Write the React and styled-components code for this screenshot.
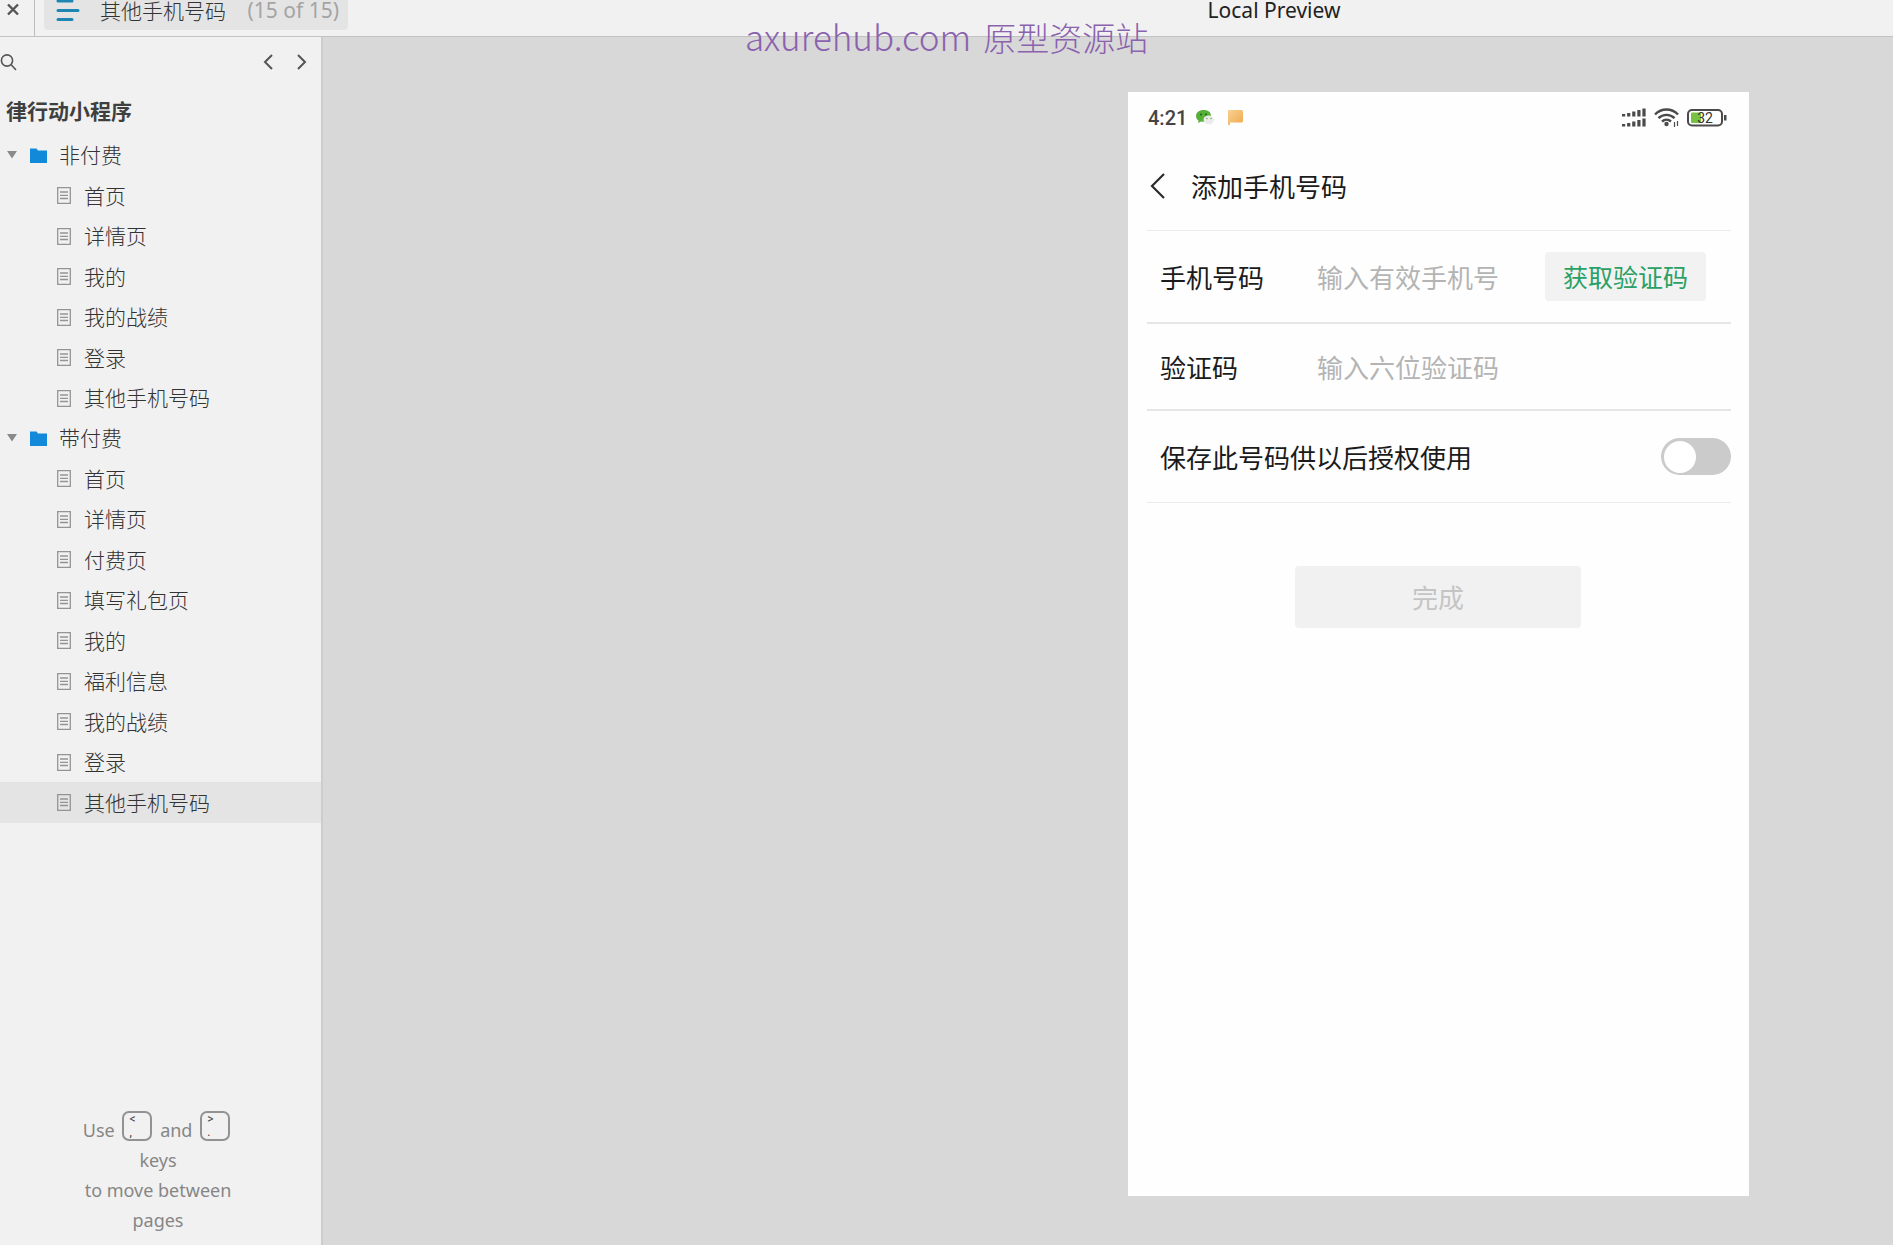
import React, { useState } from "react";
import styled, { createGlobalStyle } from "styled-components";

const GlobalStyle = createGlobalStyle`
  * { box-sizing: border-box; }
  body {
    margin: 0;
    background: #d8d8d8;
    font-family: "Noto Sans", "Noto Sans CJK SC", sans-serif;
    color: #444;
  }
  button, input { font: inherit; }
`;

const cjk = `"Noto Sans CJK SC", "Noto Sans", sans-serif`;

const Screen = styled.div`
  display: flex;
  flex-direction: column;
  min-height: 100vh;
`;

const TopBar = styled.header`
  display: flex;
  align-items: flex-start;
  height: 37px;
  background: #f1f1f1;
  border-bottom: 1px solid #c2c2c2;
`;

const CloseButton = styled.button`
  display: flex;
  justify-content: center;
  width: 35px;
  height: 36px;
  padding: 3px 8px 0 0;
  border: 0;
  border-right: 1px solid #bdbdbd;
  background: none;
`;

const PageTab = styled.button`
  display: flex;
  align-items: flex-start;
  width: 304px;
  height: 30px;
  margin-left: 9px;
  padding: 0 9px 0 12px;
  border: 0;
  border-radius: 0 0 4px 4px;
  background: #e4e4e4;
  color: #333;
  font-family: ${cjk};
  font-size: 21px;
  font-weight: 300;
  line-height: 21px;
  white-space: nowrap;
`;

const TabTitle = styled.span`
  margin-left: 20px;
`;

const TabCount = styled.span`
  margin-left: auto;
  color: #a4a4a4;
  font-family: "Noto Sans", sans-serif;
  font-size: 21px;
  font-weight: 400;
`;

const PreviewTitle = styled.div`
  flex: 1;
  padding-left: 307px;
  color: #222;
  font-size: 21px;
  line-height: 21px;
  text-align: center;
`;

const Watermark = styled.div`
  position: absolute;
  top: 12px;
  left: 0;
  right: 0;
  display: flex;
  justify-content: center;
  align-items: baseline;
  gap: 12px;
  color: #8a62ae;
  font-family: ${cjk};
  font-size: 33px;
  font-weight: 300;
  line-height: 48px;
  pointer-events: none;
`;

const SiteName = styled.span`
  font-size: 35px;
`;

const Body = styled.div`
  display: flex;
  flex: 1;
`;

const Sidebar = styled.aside`
  display: flex;
  flex-direction: column;
  width: 323px;
  flex: none;
  background: #f1f1f1;
  border-right: 2px solid #cdcdcd;
`;

const SearchRow = styled.div`
  display: flex;
  align-items: center;
  height: 50px;
  padding-right: 14px;
`;

const IconButton = styled.button`
  display: flex;
  padding: 0;
  border: 0;
  background: none;
  color: #555;
`;

const Pager = styled.div`
  display: flex;
  gap: 22px;
  margin-left: auto;
`;

const ProjectName = styled.h1`
  margin: 7px 0 9px;
  padding-left: 6px;
  color: #3f3f3f;
  font-family: ${cjk};
  font-size: 21px;
  font-weight: 700;
  line-height: 32px;
`;

const Tree = styled.ul`
  margin: 0;
  padding: 0;
  list-style: none;
  color: #333;
  font-family: ${cjk};
  font-size: 21px;
  font-weight: 300;
`;

const FolderRow = styled.div`
  display: flex;
  align-items: center;
  height: 40px;
  padding-left: 7px;
`;

const FolderName = styled.span`
  margin-left: 12px;
  padding-bottom: 2px;
`;

const Pages = styled.ul`
  margin: 0;
  padding: 0;
  list-style: none;
`;

const PageItem = styled.li`
  height: 40px;
  background: ${(p) => (p.$active ? "#e4e4e4" : "none")};
  &:nth-child(odd) { height: 41px; }
`;

const PageLink = styled.a`
  display: flex;
  align-items: center;
  gap: 13px;
  height: 100%;
  padding-left: 57px;
  color: inherit;
  text-decoration: none;
`;

const PageName = styled.span`
  padding-bottom: 2px;
`;

const KeyHint = styled.p`
  width: 156px;
  margin: auto 0 10px 80px;
  color: #868686;
  font-size: 18px;
  line-height: 30px;
  text-align: center;
`;

const Key = styled.kbd`
  display: inline-block;
  width: 30px;
  height: 30px;
  margin: 0 3px;
  padding-left: 5px;
  border: 2px solid #929292;
  border-radius: 7px;
  overflow: hidden;
  color: #444;
  font-family: Roboto, sans-serif;
  font-size: 12px;
  line-height: 13px;
  text-align: left;
  vertical-align: -4px;
`;

const KeySymbol = styled.span`
  display: block;
`;

const Canvas = styled.main`
  display: flex;
  flex: 1;
  justify-content: flex-end;
  align-items: flex-start;
  padding: 55px 144px 49px 0;
`;

const Phone = styled.section`
  width: 621px;
  min-height: 1104px;
  padding: 0 18px 0 19px;
  background: #fefefe;
  color: #1b1b1b;
  font-family: ${cjk};
  font-size: 26px;
`;

const StatusBar = styled.div`
  display: flex;
  align-items: center;
  height: 51px;
  padding: 0 4px 0 1px;
`;

const Time = styled.time`
  margin-right: 9px;
  color: #444;
  font-family: Roboto, sans-serif;
  font-size: 20px;
  font-weight: 500;
`;

const StatusIcons = styled.div`
  display: flex;
  align-items: center;
  gap: 8px;
  margin-left: auto;
`;

const NavBar = styled.div`
  display: flex;
  align-items: center;
  gap: 26px;
  height: 88px;
  padding: 0 0 2px 3px;
  border-bottom: 1px solid #ebebeb;
`;

const NavTitle = styled.h2`
  margin: 0;
  font-size: 26px;
  font-weight: 400;
`;

const Row = styled.div`
  display: flex;
  align-items: center;
  height: ${(p) => p.$height}px;
  padding-left: 13px;
  border-bottom: ${(p) => (p.$faint ? "1px solid #ebebeb" : "2px solid #e6e6e6")};
`;

const Label = styled.label`
  flex: ${(p) => (p.$wide ? "1" : "0 0 157px")};
`;

const Field = styled.input`
  flex: 1;
  min-width: 0;
  padding: 0;
  border: 0;
  outline: 0;
  background: none;
  color: inherit;
  &::placeholder { color: #b4b4b4; opacity: 1; }
`;

const CodeButton = styled.button`
  width: 161px;
  height: 49px;
  margin-right: 25px;
  padding: 0 0 2px;
  border: 0;
  border-radius: 4px;
  background: #f2f2f2;
  color: #29a065;
  font-size: 25px;
`;

const Toggle = styled.input`
  appearance: none;
  display: flex;
  align-items: center;
  width: 70px;
  height: 37px;
  margin: 0;
  padding: 3px;
  border-radius: 19px;
  background: ${(p) => (p.checked ? "#29a065" : "#cbcbcb")};
  &::before {
    content: "";
    width: 32px;
    height: 32px;
    margin-left: ${(p) => (p.checked ? "auto" : "0")};
    border-radius: 50%;
    background: #fff;
  }
`;

const DoneButton = styled.button`
  display: block;
  width: 286px;
  height: 62px;
  margin: 63px auto 0 148px;
  padding: 0 0 2px;
  border: 0;
  border-radius: 4px;
  background: #f1f1f1;
  color: #c4c4c4;
`;

const groups = [
  { name: "非付费", pages: ["首页", "详情页", "我的", "我的战绩", "登录", "其他手机号码"] },
  {
    name: "带付费",
    pages: ["首页", "详情页", "付费页", "填写礼包页", "我的", "福利信息", "我的战绩", "登录", "其他手机号码"],
    active: 8,
  },
];

const CloseIcon = () => (
  <svg width="14" height="14" viewBox="0 0 14 14" stroke="#555" strokeWidth="2.4">
    <path d="M2 1.5 12 11.5M12 1.5 2 11.5" />
  </svg>
);

const MenuIcon = () => (
  <svg width="24" height="22" viewBox="0 0 24 22" stroke="#1d86b2" strokeWidth="3" strokeLinecap="round">
    <path d="M2 1H16M2 10.5H22M2 19.5H16" />
  </svg>
);

const SearchIcon = () => (
  <svg width="17" height="18" viewBox="0 0 17 18" fill="none" stroke="#555" strokeWidth="1.6">
    <circle cx="7" cy="7.5" r="5.6" />
    <path d="M11 11.5 16 17" />
  </svg>
);

const Chevron = ({ right }) => (
  <svg width="11" height="16" viewBox="0 0 11 16" fill="none" stroke="currentColor" strokeWidth="2">
    <path d={right ? "M2 1 9 8 2 15" : "M9 1 2 8 9 15"} />
  </svg>
);

const Caret = () => (
  <svg width="10" height="8" viewBox="0 0 10 8" fill="#8a8a8a">
    <path d="M0 0H10L5 7.5Z" />
  </svg>
);

const FolderSvg = styled.svg`
  margin-left: 13px;
`;

const FolderIcon = () => (
  <FolderSvg width="17" height="15" viewBox="0 0 17 15" fill="#128ad9">
    <path d="M0 0.5H6.5L8 2.5H17V15H0Z" />
  </FolderSvg>
);

const PageIcon = () => (
  <svg width="14" height="17" viewBox="0 0 14 17" fill="none" stroke="#949494" strokeWidth="1.3">
    <path d="M.7.7H13.3V16.3H.7ZM3 5H11M3 8.3H11M3 11.5H11" />
  </svg>
);

const WeChatIcon = () => (
  <svg width="18" height="16" viewBox="0 0 18 16">
    <path d="M7.5 0C3 0 0 2.6 0 6c0 2 1 3.5 2.6 4.6L2 13l3-1.5c6 1 10-1.5 10-5.5S12 0 7.5 0Z" fill="#57b038" />
    <circle cx="5" cy="4.5" r="1" fill="#245c18" />
    <circle cx="10" cy="4.5" r="1" fill="#245c18" />
    <path d="M12.5 5.5C9.5 5.5 7.5 7.4 7.5 9.8s2 4.3 5 4.3l1.5-.1 2.2 1.2-.4-1.9c1.3-.8 2.2-2 2.2-3.5 0-2.4-2.5-4.3-5.5-4.3Z" fill="#ebebeb" />
    <circle cx="11" cy="8.5" r=".8" fill="#75b65d" />
    <circle cx="15" cy="8.5" r=".8" fill="#75b65d" />
  </svg>
);

const FlagSvg = styled.svg`
  margin-left: 13px;
`;

const FlagIcon = () => (
  <FlagSvg width="16" height="15" viewBox="0 0 16 15">
    <defs>
      <linearGradient id="flag" x1="0" y1="0" x2="1" y2="1">
        <stop offset="0" stopColor="#f8d193" />
        <stop offset="1" stopColor="#f0a94c" />
      </linearGradient>
    </defs>
    <path d="M1 0H14.5Q16 0 16 1.5V11Q16 12.5 14.5 12.5H3V15H1Z" fill="url(#flag)" />
  </FlagSvg>
);

const SignalIcon = () => (
  <svg width="24" height="19" viewBox="0 0 24 19" fill="#4a4a4a">
    {[2.5, 3.5, 5, 6.5, 8].map((h, i) => (
      <g key={h}>
        <rect x={i * 5.1} y={8.5 - h} width="3.2" height={h} />
        <rect x={i * 5.1} y={18.5 - h} width="3.2" height={h} />
      </g>
    ))}
  </svg>
);

const WifiIcon = () => (
  <svg width="25" height="19" viewBox="0 0 25 19" fill="none" stroke="#4a4a4a" strokeWidth="2.4">
    <path d="M1 6.5C7.5-.2 17.5-.2 24 6.5M4.5 10.2c4.5-4.5 11.5-4.5 16 0M8 13.5c2.7-2.5 6.3-2.5 9 0" />
    <circle cx="12.5" cy="16" r="1" />
    <path d="M20.5 14v5M23.5 13v5" strokeWidth="1.2" />
  </svg>
);

const BatteryIcon = () => (
  <svg width="40" height="18" viewBox="0 0 40 18">
    <rect x="1" y="1" width="34" height="15.5" rx="4" fill="#fff" stroke="#4a4a4a" strokeWidth="2" />
    <rect x="4" y="3.5" width="10" height="10.5" rx="1" fill="#79c143" />
    <rect x="37" y="6" width="2.5" height="5.5" fill="#4a4a4a" />
    <text x="18" y="14" textAnchor="middle" fontFamily="Roboto, sans-serif" fontSize="14" fill="#333">32</text>
  </svg>
);

const BackIcon = () => (
  <svg width="15" height="26" viewBox="0 0 15 26" fill="none" stroke="#2b2b2b" strokeWidth="2.2">
    <path d="M14 1 2 13 14 25" />
  </svg>
);

export default function App() {
  const [saved, setSaved] = useState(false);
  return (
    <Screen>
      <GlobalStyle />
      <TopBar>
        <CloseButton aria-label="Close"><CloseIcon /></CloseButton>
        <PageTab>
          <MenuIcon />
          <TabTitle>其他手机号码</TabTitle>
          <TabCount>(15 of 15)</TabCount>
        </PageTab>
        <PreviewTitle>Local Preview</PreviewTitle>
      </TopBar>
      <Watermark>
        <SiteName>axurehub.com</SiteName>
        <span>原型资源站</span>
      </Watermark>
      <Body>
        <Sidebar>
          <SearchRow>
            <IconButton aria-label="Search"><SearchIcon /></IconButton>
            <Pager>
              <IconButton aria-label="Previous page"><Chevron /></IconButton>
              <IconButton aria-label="Next page"><Chevron right /></IconButton>
            </Pager>
          </SearchRow>
          <ProjectName>律行动小程序</ProjectName>
          <Tree>
            {groups.map((group) => (
              <li key={group.name}>
                <FolderRow>
                  <Caret />
                  <FolderIcon />
                  <FolderName>{group.name}</FolderName>
                </FolderRow>
                <Pages>
                  {group.pages.map((page, i) => (
                    <PageItem key={page} $active={i === group.active}>
                      <PageLink href="#">
                        <PageIcon />
                        <PageName>{page}</PageName>
                      </PageLink>
                    </PageItem>
                  ))}
                </Pages>
              </li>
            ))}
          </Tree>
          <KeyHint>
            Use <Key><KeySymbol>&lt;</KeySymbol><KeySymbol>,</KeySymbol></Key> and{" "}
            <Key><KeySymbol>&gt;</KeySymbol><KeySymbol>.</KeySymbol></Key> keys
            <br />
            to move between pages
          </KeyHint>
        </Sidebar>
        <Canvas>
          <Phone>
            <StatusBar>
              <Time>4:21</Time>
              <WeChatIcon />
              <FlagIcon />
              <StatusIcons>
                <SignalIcon />
                <WifiIcon />
                <BatteryIcon />
              </StatusIcons>
            </StatusBar>
            <NavBar>
              <IconButton aria-label="Back"><BackIcon /></IconButton>
              <NavTitle>添加手机号码</NavTitle>
            </NavBar>
            <Row $height={93}>
              <Label htmlFor="phone">手机号码</Label>
              <Field id="phone" placeholder="输入有效手机号" />
              <CodeButton>获取验证码</CodeButton>
            </Row>
            <Row $height={87}>
              <Label htmlFor="code">验证码</Label>
              <Field id="code" placeholder="输入六位验证码" />
            </Row>
            <Row $height={92} $faint>
              <Label htmlFor="save" $wide>保存此号码供以后授权使用</Label>
              <Toggle id="save" type="checkbox" checked={saved} onChange={(e) => setSaved(e.target.checked)} />
            </Row>
            <DoneButton>完成</DoneButton>
          </Phone>
        </Canvas>
      </Body>
    </Screen>
  );
}
